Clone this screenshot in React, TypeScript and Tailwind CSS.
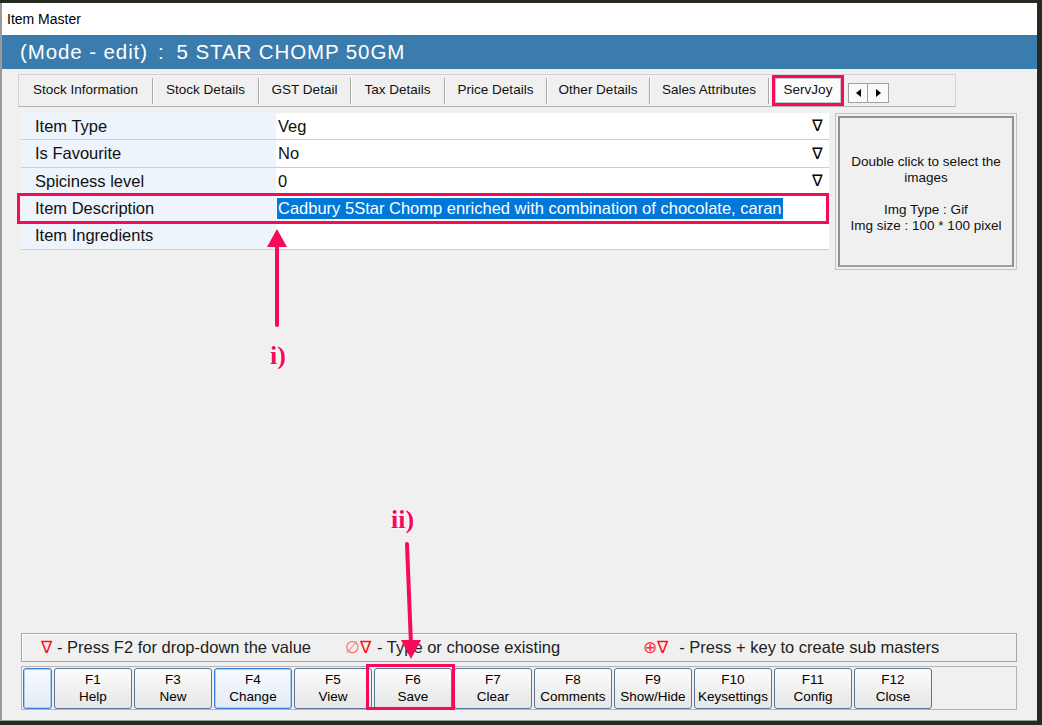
import React from "react";

const tabs: [string, string][] = [
	["Stock Information", "w-[134px]"],
	["Stock Details", "w-[106px]"],
	["GST Detail", "w-[92px]"],
	["Tax Details", "w-[94px]"],
	["Price Details", "w-[102px]"],
	["Other Details", "w-[103px]"],
	["Sales Attributes", "w-[119px]"],
];

type Row = { label: string; value: string; drop?: boolean; selected?: boolean };

const rows: Row[] = [
	{ label: "Item Type", value: "Veg", drop: true },
	{ label: "Is Favourite", value: "No", drop: true },
	{ label: "Spiciness level", value: "0", drop: true },
	{
		label: "Item Description",
		value: "Cadbury 5Star Chomp enriched with combination of chocolate, caran",
		selected: true,
	},
	{ label: "Item Ingredients", value: "" },
];

const keys: [string, string][] = [
	["F1", "Help"],
	["F3", "New"],
	["F4", "Change"],
	["F5", "View"],
	["F6", "Save"],
	["F7", "Clear"],
	["F8", "Comments"],
	["F9", "Show/Hide"],
	["F10", "Keysettings"],
	["F11", "Config"],
	["F12", "Close"],
];

function KeyButton({ k, label, focus }: { k: string; label: string; focus?: boolean }) {
	return (
		<div
			className={
				focus
					? "w-[78px] h-[41px] rounded-[3px] border border-[#3d7fd6] shadow-[inset_0_0_0_1px_#a9cdf5] bg-linear-to-b from-[#f7fbff] to-[#e2ebf5] flex flex-col items-center justify-center leading-[17px] text-[13.5px] text-black"
					: "w-[78px] h-[41px] rounded-[3px] border border-[#5a7598] bg-linear-to-b from-[#fcfcfc] to-[#e6e6e6] flex flex-col items-center justify-center leading-[17px] text-[13.5px] text-black"
			}
		>
			<span>{k}</span>
			<span>{label}</span>
		</div>
	);
}

export default function App() {
	return (
		<div className="relative w-[1042px] h-[725px] overflow-hidden bg-[#262b22] font-['Liberation_Sans',Arial,sans-serif]">
			<div className="mt-[3px] w-[1037px] h-[718px] flex flex-col border-l-2 border-b border-[#9a9a9a] bg-[#f0f0f0]">
				{/* title bar */}
				<div className="h-[32px] bg-white flex items-center pl-[5px] text-[14px] text-black">
					Item Master
				</div>
				{/* mode header */}
				<div className="h-[34px] bg-[#3b7cae] flex items-center pl-[18px] text-[20.5px] tracking-[0.9px] text-white">
					<span>(Mode - edit)</span>
					<span className="ml-[10px]">:</span>
					<span className="ml-[12px]">5 STAR CHOMP 50GM</span>
				</div>

				<div className="flex-1 flex flex-col">
					{/* tab strip */}
					<div className="ml-[16px] mt-[5px] w-[938px] h-[33px] border border-[#d2d2d2] border-b-[#b4b4b4] flex items-center text-[13.5px] text-[#111]">
						{tabs.map(([t, w]) => (
							<div
								key={t}
								className={`${w} h-[26px] flex items-center justify-center border-r border-[#a8a8a8] shadow-[1px_0_0_#ffffff]`}
							>
								{t}
							</div>
						))}
						<div className="ml-[3px] w-[72px] h-[31px] border-[3px] border-[#f70a57] flex items-center justify-center">
							<div className="w-full h-full bg-[#fbfbfb] border border-[#c8c8c8] flex items-center justify-center">
								ServJoy
							</div>
						</div>
						<div className="ml-[4px] mt-[5px] flex">
							<div className="w-[20px] h-[20px] border border-[#a0a0a0] bg-[#fafafa] flex items-center justify-center">
								<div className="w-0 h-0 border-y-[4px] border-y-transparent border-r-[5px] border-r-black" />
							</div>
							<div className="w-[21px] h-[20px] border border-l-0 border-[#a0a0a0] bg-[#fafafa] flex items-center justify-center">
								<div className="w-0 h-0 border-y-[4px] border-y-transparent border-l-[5px] border-l-black" />
							</div>
						</div>
					</div>

					{/* grid + image */}
					<div className="flex mt-[6px] ml-[19px]">
						<div className="w-[808px] flex flex-col">
							{rows.map((r) => (
								<div key={r.label} className="h-[27.4px] flex border-b border-[#cfcfcf] text-[16.5px] text-[#111]">
									<div className="w-[255px] bg-[#edf4fc] flex items-center pl-[14px]">{r.label}</div>
									<div className="flex-1 bg-white flex items-center pl-[1px] pr-[6px]">
										{r.selected ? (
											<span className="bg-[#0078d7] text-white px-[1px] leading-[21px]">{r.value}</span>
										) : (
											<span className="pl-[1px]">{r.value}</span>
										)}
										{r.drop && <span className="ml-auto text-[16px] text-black">∇</span>}
									</div>
								</div>
							))}
						</div>
						<div className="ml-[6px] w-[182px] h-[157px] border border-[#c4c4c4] p-[2px]">
							<div className="w-full h-full border-2 border-[#8f8f8f] border-b-[#a0a0a0] flex flex-col items-center pt-[36px] text-[13.5px] leading-[16px] text-[#111]">
								<span>Double click to select the</span>
								<span>images</span>
								<span className="mt-[16px]">Img Type : Gif</span>
								<span>Img size : 100 * 100 pixel</span>
							</div>
						</div>
					</div>

					<div className="flex-1" />

					{/* legend */}
					<div className="ml-[19px] w-[996px] h-[29px] border border-[#a6a6a6] shadow-[inset_1px_1px_0_#ffffff] flex items-center text-[16.5px] text-[#222]">
						<span className="ml-[19px] text-[#ff1010]">∇</span>
						<span className="ml-[5px]">- Press F2 for drop-down the value</span>
						<span className="ml-[34px] text-[#ff6a6a]">∅</span>
						<span className="text-[#ff1010]">∇</span>
						<span className="ml-[6px]">- Type or choose existing</span>
						<span className="ml-[83px] text-[#ff3030]">⊕</span>
						<span className="text-[#ff1010]">∇</span>
						<span className="ml-[11px]">- Press + key to create sub masters</span>
					</div>

					{/* function keys */}
					<div className="ml-[19px] mt-[4px] mb-[10px] w-[996px] h-[44px] border border-[#b4b4b4] flex items-center gap-[2px] pl-[1px]">
						<div className="w-[29px] h-[41px] rounded-[3px] border border-[#3d7fd6] shadow-[inset_0_0_0_1px_#a9cdf5] bg-linear-to-b from-[#f7fbff] to-[#e2ebf5]" />
						{keys.map(([k, l]) => (
							<KeyButton key={k} k={k} label={l} focus={k === "F4"} />
						))}
					</div>
				</div>
			</div>

			{/* annotations */}
			<div className="absolute left-[17px] top-[193px] w-[812px] h-[31px] border-[3px] border-[#f70a57]" />
			<div className="absolute left-[366px] top-[664px] w-[89px] h-[46px] border-[3px] border-[#f70a57]" />
			<svg className="absolute left-0 top-0" width="1042" height="725">
				<line x1="277" y1="325" x2="277" y2="240" stroke="#f70a57" strokeWidth="4" strokeLinecap="round" />
				<polygon points="277,229 267,247 287,247" fill="#f70a57" />
				<line x1="407" y1="544" x2="411" y2="645" stroke="#f70a57" strokeWidth="4" strokeLinecap="round" />
				<polygon points="411,659 401,640 421,640" fill="#f70a57" />
			</svg>
			<div className="absolute left-[270px] top-[336px] font-['Liberation_Serif',serif] font-bold text-[26px] text-[#f70a57] [text-shadow:0_0_3px_#ffffff,0_0_3px_#ffffff,0_0_2px_#ffffff]">
				i)
			</div>
			<div className="absolute left-[391px] top-[500px] font-['Liberation_Serif',serif] font-bold text-[26px] text-[#f70a57] [text-shadow:0_0_3px_#ffffff,0_0_3px_#ffffff,0_0_2px_#ffffff]">
				ii)
			</div>
		</div>
	);
}
